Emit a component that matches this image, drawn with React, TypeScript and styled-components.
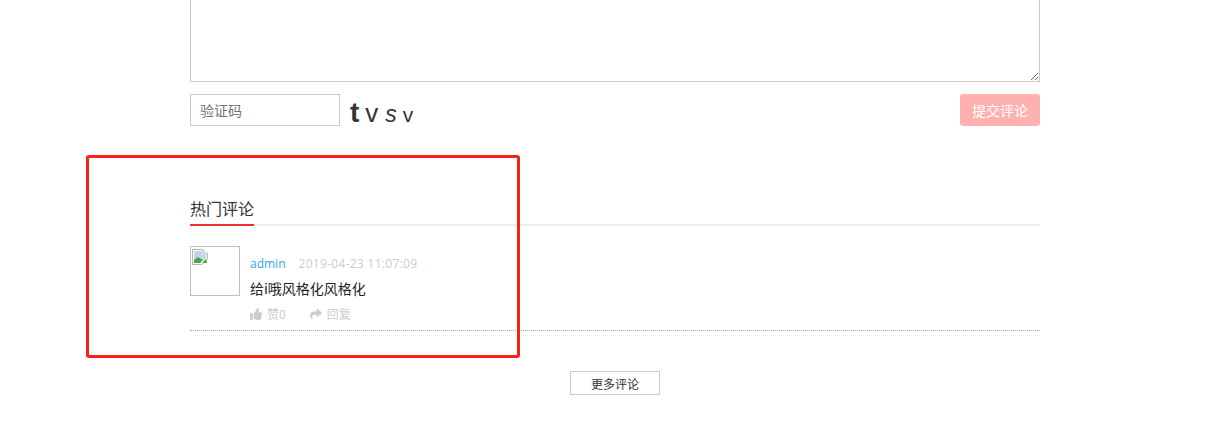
import styled, { createGlobalStyle } from "styled-components";
import { FaThumbsUp, FaShare } from "react-icons/fa";

const GlobalStyle = createGlobalStyle`
  html, body {
    margin: 0;
    padding: 0;
    height: 433px;
    overflow: hidden;
    background: #fff;
    font-family: "Open Sans", "Noto Sans CJK SC", sans-serif;
  }
`;

const Page = styled.div`
  position: relative;
  height: 433px;
  overflow: hidden;
`;

const Container = styled.div`
  width: 850px;
  margin: -20px 0 0 190px;
`;

const Editor = styled.textarea`
  display: block;
  width: 100%;
  height: 102px;
  box-sizing: border-box;
  border: 1px solid #c8c8c8;
  outline: none;
  overflow: hidden;
`;

const FormRow = styled.div`
  display: flex;
  align-items: center;
  justify-content: space-between;
  margin-top: 12px;
  height: 32px;
`;

const CaptchaGroup = styled.div`
  display: flex;
  align-items: center;
`;

const CaptchaInput = styled.input`
  width: 150px;
  height: 32px;
  box-sizing: border-box;
  padding: 0 9px;
  border: 1px solid #c8c8c8;
  font-family: "Noto Sans CJK SC", sans-serif;
  font-size: 14px;
  outline: none;

  &::placeholder {
    color: #757575;
    opacity: 1;
  }
`;

const Captcha = styled.div`
  display: flex;
  align-items: baseline;
  margin: 6px 0 0 10px;
  color: #333;
  font-family: "Liberation Sans", sans-serif;
`;

const CaptchaChar = styled.span<{ $size: number; $gap: number; $bold?: boolean; $italic?: boolean }>`
  font-size: ${(p) => p.$size}px;
  margin-right: ${(p) => p.$gap}px;
  font-weight: ${(p) => (p.$bold ? 700 : 400)};
  font-style: ${(p) => (p.$italic ? "italic" : "normal")};
`;

const SubmitButton = styled.button`
  width: 80px;
  height: 32px;
  padding: 0;
  border: none;
  border-radius: 3px;
  background: #ffb0b0;
  color: #fff;
  font-family: "Noto Sans CJK SC", sans-serif;
  font-size: 14px;
`;

const SectionHeader = styled.div`
  margin-top: 69px;
  height: 29px;
  border-bottom: 2px solid #eee;
  box-sizing: content-box;
`;

const SectionTitle = styled.span`
  display: inline-block;
  height: 29px;
  border-bottom: 2px solid #f03030;
  color: #333;
  font-family: "Noto Sans CJK SC", sans-serif;
  font-size: 16px;
  line-height: 26px;
`;

const Comment = styled.div`
  display: flex;
  gap: 10px;
  margin-top: 20px;
  height: 84px;
  border-bottom: 1px dotted #aaa;
`;

const Avatar = styled.div`
  width: 50px;
  height: 50px;
  box-sizing: border-box;
  border: 1px solid #c0c0c0;
  padding: 1px;
  flex-shrink: 0;
`;

const CommentBody = styled.div`
  display: flex;
  flex-direction: column;
  padding-top: 9px;
`;

const Meta = styled.div`
  display: flex;
  gap: 13px;
  height: 17px;
  line-height: 17px;
  font-size: 12px;
`;

const Author = styled.span`
  color: #2aa5f5;
`;

const Time = styled.span`
  color: #ccc;
  letter-spacing: 0.3px;
`;

const CommentText = styled.div`
  margin-top: 7px;
  height: 18px;
  line-height: 18px;
  color: #222;
  font-family: "Noto Sans CJK SC", sans-serif;
  font-size: 14px;
`;

const Actions = styled.div`
  display: flex;
  gap: 24px;
  margin-top: 8px;
`;

const Action = styled.span`
  display: inline-flex;
  align-items: center;
  gap: 5px;
  color: #ccc;
  font-family: "Noto Sans CJK SC", sans-serif;
  font-size: 12px;
  line-height: 18px;
`;

const MoreRow = styled.div`
  display: flex;
  justify-content: center;
  margin-top: 40px;
`;

const MoreButton = styled.button`
  width: 90px;
  height: 24px;
  padding: 0;
  background: #fff;
  border: 1px solid #c8c8c8;
  color: #333;
  font-family: "Noto Sans CJK SC", sans-serif;
  font-size: 12px;
`;

// red marker someone drew over the screenshot
const Annotation = styled.div`
  position: absolute;
  left: 86px;
  top: 155px;
  width: 434px;
  height: 203px;
  box-sizing: border-box;
  border: 3px solid #f5231a;
  border-radius: 3px;
`;

const BrokenImage = () => (
  <svg width="16" height="16" viewBox="0 0 16 16">
    <path d="M.5 .5H11L15.500 5v4.500L10 15.500H.5z" fill="#fff" stroke="#b4b4b4" />
    <path d="M11 .5V5h4.500" fill="#eee" stroke="#b4b4b4" />
    <path d="M2 2h8v4h4v3l-3 3H2z" fill="#c3d4f2" />
    <path d="M2 14v-3l4-3 3 2 2 1-3 3z" fill="#4fa63c" />
    <path d="M10 14l4.500-4.500L15 14z" fill="#4fa63c" />
  </svg>
);

const App = () => {
  return (
    <Page>
      <GlobalStyle />
      <Container>
        <Editor />
        <FormRow>
          <CaptchaGroup>
            <CaptchaInput placeholder="验证码" />
            <Captcha>
              <CaptchaChar $size={28} $gap={6} $bold>t</CaptchaChar>
              <CaptchaChar $size={26} $gap={7}>v</CaptchaChar>
              <CaptchaChar $size={23} $gap={6} $italic>s</CaptchaChar>
              <CaptchaChar $size={21} $gap={0}>v</CaptchaChar>
            </Captcha>
          </CaptchaGroup>
          <SubmitButton>提交评论</SubmitButton>
        </FormRow>

        <SectionHeader>
          <SectionTitle>热门评论</SectionTitle>
        </SectionHeader>

        <Comment>
          <Avatar>
            <BrokenImage />
          </Avatar>
          <CommentBody>
            <Meta>
              <Author>admin</Author>
              <Time>2019-04-23 11:07:09</Time>
            </Meta>
            <CommentText>给i哦风格化风格化</CommentText>
            <Actions>
              <Action>
                <FaThumbsUp size={12} />
                赞0
              </Action>
              <Action>
                <FaShare size={12} />
                回复
              </Action>
            </Actions>
          </CommentBody>
        </Comment>

        <MoreRow>
          <MoreButton>更多评论</MoreButton>
        </MoreRow>
      </Container>
      <Annotation />
    </Page>
  );
};

export default App;
